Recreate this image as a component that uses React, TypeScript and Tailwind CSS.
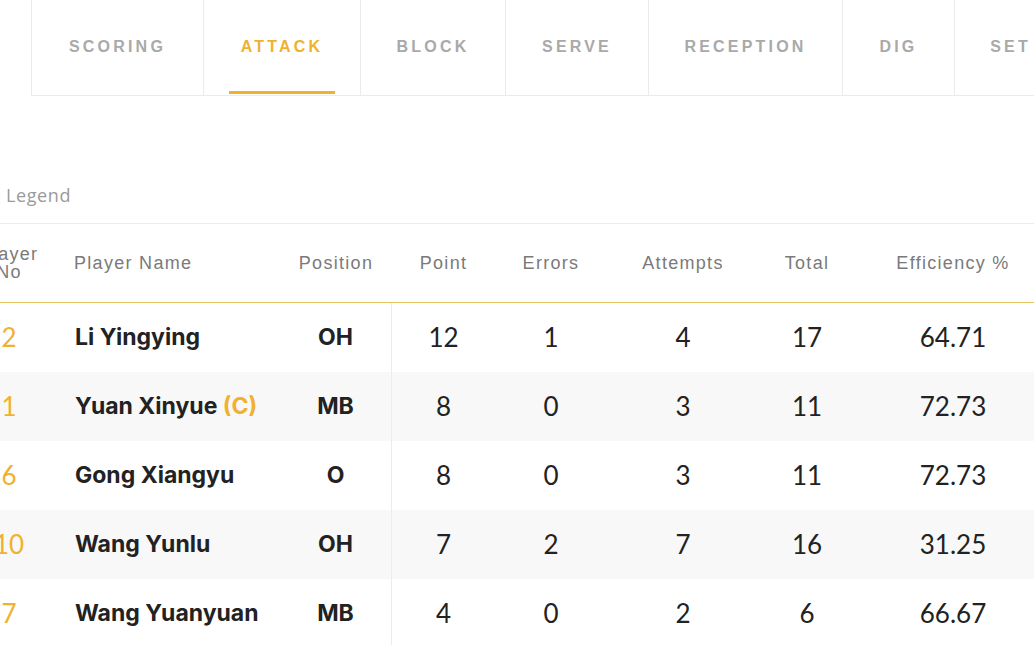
const tabs = ["SCORING", "ATTACK", "BLOCK", "SERVE", "RECEPTION", "DIG", "SET"];

const tabWidths: Record<string, string> = {
  SCORING: "w-[172px]",
  ATTACK: "w-[157px]",
  BLOCK: "w-[145px]",
  SERVE: "w-[143px]",
  RECEPTION: "w-[194px]",
  DIG: "w-[112px]",
  SET: "w-[112px]",
};

const players = [
  { no: 2, name: "Li Yingying", captain: false, pos: "OH", point: 12, errors: 1, attempts: 4, total: 17, eff: "64.71" },
  { no: 1, name: "Yuan Xinyue", captain: true, pos: "MB", point: 8, errors: 0, attempts: 3, total: 11, eff: "72.73" },
  { no: 6, name: "Gong Xiangyu", captain: false, pos: "O", point: 8, errors: 0, attempts: 3, total: 11, eff: "72.73" },
  { no: 10, name: "Wang Yunlu", captain: false, pos: "OH", point: 7, errors: 2, attempts: 7, total: 16, eff: "31.25" },
  { no: 7, name: "Wang Yuanyuan", captain: false, pos: "MB", point: 4, errors: 0, attempts: 2, total: 6, eff: "66.67" },
];

const cols = "grid grid-cols-[64px_239px_112px_103px_112px_152px_96px_196px]";

const App = () => {
  return (
    <div className="w-[1034px] h-[645px] overflow-hidden bg-white font-['Inter',sans-serif]">
      <div className="-ml-[23px] w-[1100px]">
        {/* Tabs */}
        <div className="flex h-[96px] ml-[54px] border-b border-l border-[#ebebeb]">
          {tabs.map((t) => {
            const active = t === "ATTACK";
            return (
              <div
                key={t}
                className={`relative flex items-center justify-center pb-[2px] border-r border-[#ebebeb] shrink-0 ${tabWidths[t]}`}
              >
                <span
                  className={`font-['Liberation_Sans',sans-serif] font-bold text-[16px] tracking-[3.2px] ${
                    active ? "text-[#f0b12e]" : "text-[#a9a9a9]"
                  }`}
                >
                  {t}
                </span>
                {active && (
                  <div className="absolute bottom-[1px] left-[25px] right-[25px] h-[3px] bg-[#f0b12e]" />
                )}
              </div>
            );
          })}
        </div>

        {/* Legend */}
        <div className="mt-[78px] h-[50px] pt-[8px] pl-[29px] border-b border-[#ececec] font-['Open_Sans',sans-serif] text-[18px] text-[#9a9a9a] tracking-[0.6px]">
          Legend
        </div>

        {/* Header */}
        <div
          className={`${cols} h-[79px] items-center border-b border-[#e6c55f] font-['Liberation_Sans',sans-serif] text-[18px] text-[#7a7a7a] tracking-[1.3px]`}
        >
          <div className="text-center leading-[18px]">
            Player
            <br />
            No
          </div>
          <div className="pl-[33px]">Player Name</div>
          <div className="text-center">Position</div>
          <div className="text-center">Point</div>
          <div className="text-center">Errors</div>
          <div className="text-center">Attempts</div>
          <div className="text-center">Total</div>
          <div className="text-center">Efficiency %</div>
        </div>

        {/* Rows */}
        {players.map((p, i) => (
          <div
            key={p.name}
            className={`${cols} h-[69px] items-center text-[#222] ${i % 2 === 1 ? "bg-[#f8f8f8]" : "bg-white"}`}
          >
            <div className="text-center font-['Lato',sans-serif] text-[26px] text-[#f0b12e]">{p.no}</div>
            <div className="pl-[34px] text-[23px] font-bold">
              {p.name}
              {p.captain && <span className="text-[#f0b12e]"> (C)</span>}
            </div>
            <div className="h-full flex items-center justify-center text-[23px] font-bold border-r border-[#ececec]">
              {p.pos}
            </div>
            <div className="text-center font-['Lato',sans-serif] text-[26px]">{p.point}</div>
            <div className="text-center font-['Lato',sans-serif] text-[26px]">{p.errors}</div>
            <div className="text-center font-['Lato',sans-serif] text-[26px]">{p.attempts}</div>
            <div className="text-center font-['Lato',sans-serif] text-[26px]">{p.total}</div>
            <div className="text-center font-['Lato',sans-serif] text-[26px]">{p.eff}</div>
          </div>
        ))}
      </div>
    </div>
  );
};

export default App;
